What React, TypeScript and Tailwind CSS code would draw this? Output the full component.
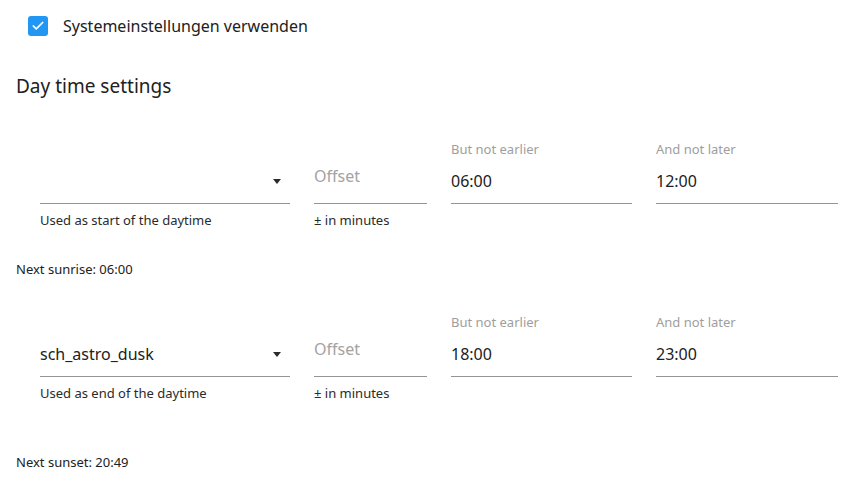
import { Check } from 'lucide-react'

interface TimeRowProps {
    value: string
    helper: string
    earlier: string
    later: string
}

function SelectField({ value, helper }: { value: string; helper: string }) {
    return (
        <div className="w-[250px] flex flex-col">
            <div className="h-4" />
            <div className="h-[47px] flex items-end justify-between border-b border-[#949494] pb-[10px]">
                <span className="text-base leading-6 text-[#212121]">{value}</span>
                <span className="mb-[9px] mr-[9px] w-0 h-0 border-l-[4px] border-r-[4px] border-t-[5px] border-l-transparent border-r-transparent border-t-[#2a2a2a]" />
            </div>
            <span className="mt-2 text-[13px] leading-4 text-[#2a2a2a]">{helper}</span>
        </div>
    )
}

function OffsetField() {
    return (
        <div className="w-[113px] flex flex-col">
            <div className="h-4" />
            <div className="h-[47px] flex items-end border-b border-[#949494] pb-[15px]">
                <span className="text-base leading-6 text-[#a3a3a3]">Offset</span>
            </div>
            <span className="mt-2 text-[13px] leading-4 text-[#2a2a2a]">± in minutes</span>
        </div>
    )
}

function TimeField({ label, value, width }: { label: string; value: string; width: string }) {
    return (
        <div className={`${width} flex flex-col`}>
            <span className="h-4 text-[13px] leading-4 text-[#9e9e9e]">{label}</span>
            <div className="h-[47px] flex items-end border-b border-[#949494] pb-[10px]">
                <span className="text-base leading-6 text-[#212121]">{value}</span>
            </div>
        </div>
    )
}

function TimeRow({ value, helper, earlier, later }: TimeRowProps) {
    return (
        <div className="flex gap-6 pl-6">
            <SelectField value={value} helper={helper} />
            <OffsetField />
            <TimeField label="But not earlier" value={earlier} width="w-[181px]" />
            <TimeField label="And not later" value={later} width="w-[182px]" />
        </div>
    )
}

export default function App() {
    return (
        <div
            className="w-[860px] h-[483px] bg-white px-4 pt-[14px] text-[#212121]"
            style={{ fontFamily: '"Segoe UI", "Noto Sans", sans-serif' }}
        >
            {/* System settings checkbox */}
            <div className="h-6 flex items-center pl-3">
                <span className="w-5 h-5 rounded-[3px] bg-[#2196f3] flex items-center justify-center">
                    <Check className="w-[14px] h-[14px] text-white" strokeWidth={3} />
                </span>
                <span className="ml-[15px] text-base leading-6 text-[#212121]">Systemeinstellungen verwenden</span>
            </div>

            <h2 className="mt-[34px] text-[19px] leading-7 font-normal text-[#212121]">Day time settings</h2>

            <div className="mt-[41px]">
                <TimeRow value="" helper="Used as start of the daytime" earlier="06:00" later="12:00" />
            </div>
            <p className="mt-[33px] text-[13px] leading-4 text-[#212121]">Next sunrise: 06:00</p>

            <div className="mt-[37px]">
                <TimeRow value="sch_astro_dusk" helper="Used as end of the daytime" earlier="18:00" later="23:00" />
            </div>
            <p className="mt-[53px] text-[13px] leading-4 text-[#212121]">Next sunset: 20:49</p>
        </div>
    )
}
